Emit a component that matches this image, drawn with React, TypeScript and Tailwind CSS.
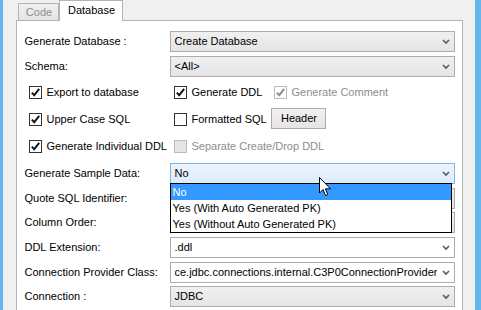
import React from 'react';

function Chevron() {
  return (
    <span className="w-[17px] h-full flex items-center justify-center shrink-0">
      <svg width="8" height="6" viewBox="0 0 8 6">
        <path d="M1 1 L4 4 L7 1" fill="none" stroke="#5a5a5a" strokeWidth="1.6" />
      </svg>
    </span>
  );
}

type ComboKind = 'gray' | 'white' | 'hover';

function Combo({ value, kind = 'gray' }: { value: string; kind?: ComboKind }) {
  const skin =
    kind === 'hover'
      ? 'border-[#7eb4ea] bg-linear-to-b from-[#ecf4fc] to-[#dcecfc]'
      : kind === 'white'
      ? 'border-[#acacac] bg-white'
      : 'border-[#acacac] bg-linear-to-b from-[#f0f0f0] to-[#e5e5e5]';
  return (
    <div className={`flex-1 h-[21px] border flex items-center pl-[3px] min-w-0 ${skin}`}>
      <span className="flex-1 whitespace-nowrap overflow-hidden">{value}</span>
      <Chevron />
    </div>
  );
}

function Row({ label, children, className = '' }: { label: string; children: React.ReactNode; className?: string }) {
  return (
    <div className={`flex items-center relative ${className}`}>
      <div className="w-[146px] shrink-0">{label}</div>
      {children}
    </div>
  );
}

type BoxState = 'on' | 'off' | 'disabledOn' | 'disabledOff';

function Check({ label, state }: { label: string; state: BoxState }) {
  const disabled = state === 'disabledOn' || state === 'disabledOff';
  const box =
    state === 'disabledOff'
      ? 'border-[#bcbcbc] bg-[#e6e6e6]'
      : state === 'disabledOn'
      ? 'border-[#bcbcbc] bg-white'
      : 'border-[#333333] bg-white';
  const checked = state === 'on' || state === 'disabledOn';
  return (
    <div className="flex items-center gap-[4px]">
      <span className={`w-[13px] h-[13px] border flex items-center justify-center ${box}`}>
        {checked && (
          <svg width="11" height="11" viewBox="0 0 11 11">
            <path
              d="M1.8 5.6 L4.2 8.2 L9.2 1.8"
              fill="none"
              stroke={disabled ? '#8c8c8c' : '#111111'}
              strokeWidth="1.9"
            />
          </svg>
        )}
      </span>
      <span className={disabled ? 'text-[#8d8d8d]' : ''}>{label}</span>
    </div>
  );
}

export default function App() {
  return (
    <div className="w-[481px] h-[310px] bg-[#f0f0f0] flex overflow-hidden relative font-['Liberation_Sans',Arial,sans-serif] text-[11px] text-black">
      <div className="w-[5px] bg-[#65b5ea]" />

      <div className="flex-1 flex flex-col pl-[13px] pr-[12px]">
        <div className="h-[21px] flex items-end -mb-px relative z-10 pl-[2px]">
          <div className="w-[41px] h-[18px] border border-[#b4b4b4] bg-linear-to-b from-[#f0f0f0] to-[#e5e5e5] text-[#8c8c8c] flex items-center justify-center">
            Code
          </div>
          <div className="w-[64px] h-[21px] border border-b-0 border-[#b4b4b4] bg-white flex items-center justify-center pb-[1px]">
            Database
          </div>
        </div>

        <div className="flex-1 bg-white border border-b-0 border-[#b4b4b4] pt-[10px] pl-[7px] pr-[7px] flex flex-col">
          <Row label="Generate Database :">
            <Combo value="Create Database" />
          </Row>
          <Row label="Schema:" className="mt-[4px]">
            <Combo value="<All>" />
          </Row>

          <div className="flex items-center h-[21px] mt-[5px]">
            <div className="w-[146px] pl-[5px]">
              <Check label="Export to database" state="on" />
            </div>
            <div className="w-[104px] pl-[4px]">
              <Check label="Generate DDL" state="on" />
            </div>
            <Check label="Generate Comment" state="disabledOn" />
          </div>
          <div className="flex items-center h-[21px] mt-[6px]">
            <div className="w-[146px] pl-[5px]">
              <Check label="Upper Case SQL" state="on" />
            </div>
            <div className="w-[101px] pl-[4px]">
              <Check label="Formatted SQL" state="off" />
            </div>
            <div className="w-[55px] h-[21px] -mt-[2px] border border-[#acacac] bg-linear-to-b from-[#f0f0f0] to-[#e5e5e5] flex items-center justify-center">
              Header
            </div>
          </div>
          <div className="flex items-center h-[21px] mt-[6px]">
            <div className="w-[146px] pl-[5px]">
              <Check label="Generate Individual DDL" state="on" />
            </div>
            <div className="pl-[4px]">
              <Check label="Separate Create/Drop DDL" state="disabledOff" />
            </div>
          </div>

          <Row label="Generate Sample Data:" className="mt-[6px] z-20">
            <Combo value="No" kind="hover" />
            <div className="absolute left-[146px] top-[20px] w-[282px] h-[50px] border border-black bg-white flex flex-col">
              <div className="h-[16px] leading-[16px] pl-[1px] bg-[#3399ff] text-white">No</div>
              <div className="h-[16px] leading-[16px] pl-[1px]">Yes (With Auto Generated PK)</div>
              <div className="h-[16px] leading-[16px] pl-[1px]">Yes (Without Auto Generated PK)</div>
            </div>
          </Row>
          <Row label="Quote SQL Identifier:" className="mt-[4px]">
            <Combo value="" />
          </Row>
          <Row label="Column Order:" className="mt-[3px]">
            <Combo value="" />
          </Row>
          <Row label="DDL Extension:" className="mt-[4px]">
            <Combo value=".ddl" kind="white" />
          </Row>
          <Row label="Connection Provider Class:" className="mt-[4px]">
            <Combo value="ce.jdbc.connections.internal.C3P0ConnectionProvider" kind="white" />
          </Row>
          <Row label="Connection :" className="mt-[3px]">
            <Combo value="JDBC" />
          </Row>
        </div>
      </div>

      <div className="w-[8px] bg-[#65b5ea]" />

      <svg className="absolute left-[319px] top-[177px] z-30" width="13" height="20" viewBox="0 0 13 20">
        <path
          d="M0.5 0.5 L0.5 16 L4 12.5 L6.5 18.5 L8.8 17.5 L6.4 11.8 L11.5 11.8 Z"
          fill="#ffffff"
          stroke="#000000"
          strokeWidth="1"
          strokeLinejoin="miter"
        />
      </svg>
    </div>
  );
}
